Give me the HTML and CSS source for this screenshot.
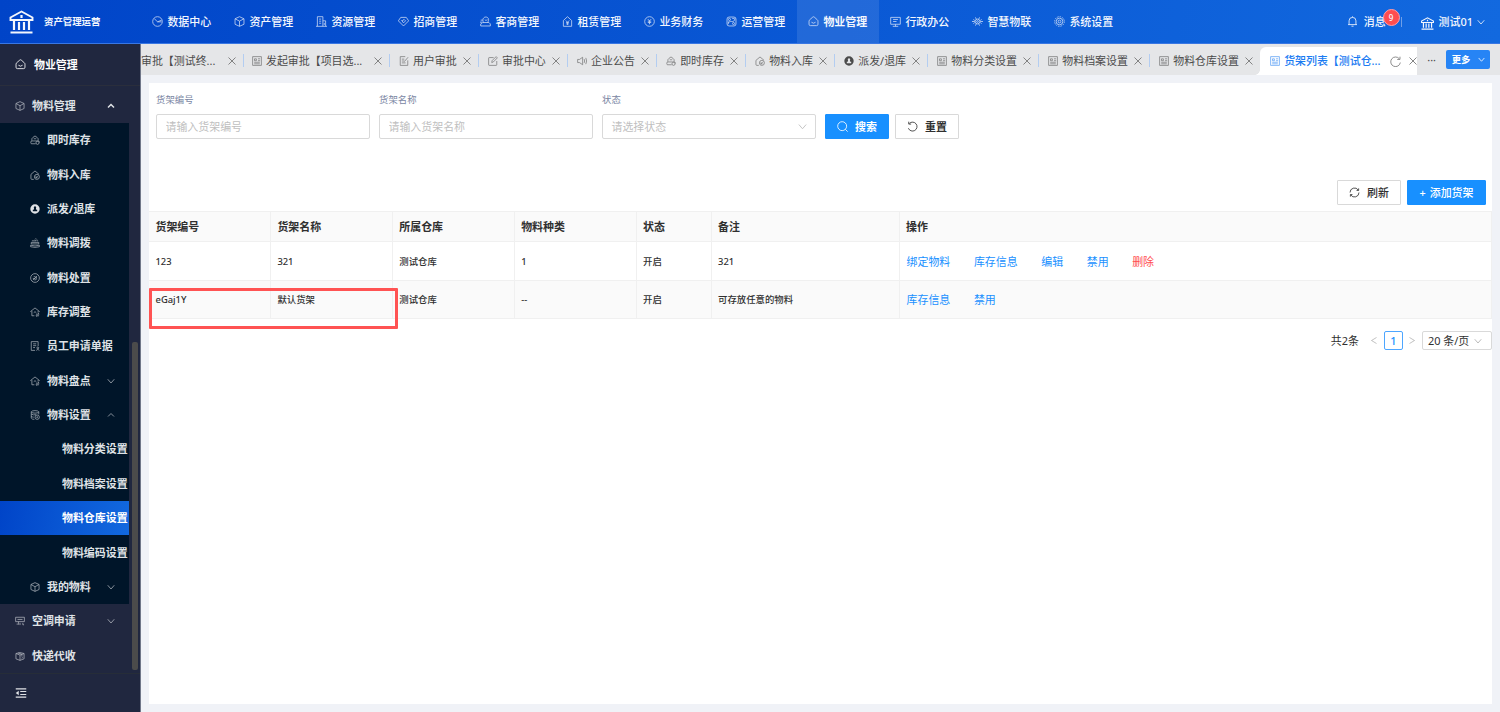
FILE: index.html
```html
<!DOCTYPE html>
<html lang="zh-CN">
  <head>
    <meta charset="UTF-8" />
    <meta name="viewport" content="width=device-width, initial-scale=1.0" />
    <title>资产管理运营</title>
    <link rel="stylesheet" href="styles.css">
  </head>
  <body>
    <!-- Icon sprite -->
    <svg class="sprite" xmlns="http://www.w3.org/2000/svg">
      <symbol id="i-bank" viewBox="0 0 24 24"><path d="M1 10V7.500L12 1.500 23 7.500V10Z" stroke-width="1.900"/><path d="M12 5v3M4.500 10.500V20M9.500 12v8M14.500 12v8M19.500 10.500V20M1 22.500h22" stroke-width="2.200"/></symbol>
      <symbol id="i-pie" viewBox="0 0 16 16"><circle cx="8" cy="8" r="7"/><path d="M3.500 4 8 8.500 14 6M8 8.500h6"/></symbol>
      <symbol id="i-cube" viewBox="0 0 16 16"><path d="M8 1l6.500 3v8L8 15l-6.500-3V4zM1.500 4 8 7.500 14.500 4M8 7.500V15"/></symbol>
      <symbol id="i-building" viewBox="0 0 16 16"><path d="M2 15V1h8v14M10 7h4v8M0 15h16M4.500 4.500h3M4.500 7.500h3M4.500 10.500h3M12 10v3"/></symbol>
      <symbol id="i-tag" viewBox="0 0 16 16"><path d="M4 2h8l3.500 5L8 14.500.500 7zM5 6l3 4 3-3-2-2-3 2"/></symbol>
      <symbol id="i-client" viewBox="0 0 16 16"><path d="M5 9.500C3 5 5 1.500 8.500 1.500S14 5 11 9.500M1 14.500v-3l3-2h9l2 2v3zM1 6h3M0 9h3M7 5.500c1 1 2 1 4 0"/></symbol>
      <symbol id="i-rent" viewBox="0 0 16 16"><path d="M2 6.500 8 1l6 5.500V15H2zM5.500 6.500 8 9l2.500-2.500M8 9v4M6 9.500h4M6 11.500h4"/></symbol>
      <symbol id="i-money" viewBox="0 0 16 16"><circle cx="8" cy="8" r="7"/><path d="M5.500 4.500 8 7l2.500-2.500M8 7v5M5.500 7.500h5M5.500 9.500h5"/></symbol>
      <symbol id="i-operate" viewBox="0 0 16 16"><rect x="1.500" y="1.500" width="13" height="13" rx="3"/><circle cx="5" cy="5" r="1.500"/><circle cx="11" cy="11" r="1.500"/><path d="M3 12q1-5 5-4t5-4M9 3.500h3.500M3.500 8v2"/></symbol>
      <symbol id="i-home" viewBox="0 0 16 16"><path d="M1.500 7.500Q1.500 6 3 5L7 1.500q1-.8 2 0L13 5q1.500 1 1.500 2.500V12q0 2-2 2h-9q-2 0-2-2zM5 9q3 3 6 0"/></symbol>
      <symbol id="i-screen" viewBox="0 0 16 16"><path d="M1 2h14v10H1zM4 15h8M8 12v3M4.500 5h7M4.500 8h5"/></symbol>
      <symbol id="i-iot" viewBox="0 0 16 16"><circle cx="8" cy="8" r="3.500"/><circle cx="8" cy="8" r="1.300"/><path d="M5 2l1.500 3M11 2 9.500 5M5 14l1.500-3M11 14 9.500 11M0 8h4M12 8h4M2 5l2 1.500M14 5l-2 1.500M2 11l2-1.500M14 11l-2-1.500"/></symbol>
      <symbol id="i-gear" viewBox="0 0 16 16"><circle cx="8" cy="8" r="7" stroke-dasharray="2.200 1.400"/><circle cx="8" cy="8" r="4.800"/><circle cx="8" cy="8" r="2"/></symbol>
      <symbol id="i-bell" viewBox="0 0 16 16"><path d="M1.500 12.500h13M3 12.500V7q0-5 5-5t5 5v5.500M6.500 14.800h3M8 .5V2"/></symbol>
      <symbol id="i-form" viewBox="0 0 16 16"><path d="M1 1h14v14H1zM4 4.500h3v3H4zM9.500 4.500H13M9.500 7.500H13M3.500 10h9M3.500 12.500h9"/></symbol>
      <symbol id="i-audit" viewBox="0 0 16 16"><path d="M10 1H2v14h12V7M4.500 5h4M4.500 8h4M4.500 11h6M8.500 9l6-7"/></symbol>
      <symbol id="i-edit" viewBox="0 0 16 16"><path d="M9 2.500H2q-1 0-1 1V14q0 1 1 1h11q1 0 1-1V8M6 10.500l.5-3L13 1l2 2-6.500 6.500z"/></symbol>
      <symbol id="i-sound" viewBox="0 0 16 16"><path d="M1 5.500h3L9 2v12l-5-3.500H1zM11.500 5q1.500 3 0 6M14 3q3 5 0 10"/></symbol>
      <symbol id="i-stock" viewBox="0 0 16 16"><path d="M3 9V6.500Q3 5 4.500 4L8 1.500 11.500 4Q13 5 13 6.500V9M6 6h4M9 14H2q-1.500-2 0-4.500h12q1 1 1 2.500"/><circle cx="12" cy="12.500" r="2.500"/></symbol>
      <symbol id="i-inbound" viewBox="0 0 16 16"><path d="M6 15H3q-1.500 0-1.500-1.500V7L8 1.500 14.500 7"/><circle cx="11" cy="11" r="4"/><path d="M12.500 9.500l-3 3M9.500 10v2.500H12"/></symbol>
      <symbol id="i-dispatch" viewBox="0 0 16 16"><path fill="currentColor" stroke="none" fill-rule="evenodd" d="M8 .5a7.500 7.500 0 1 1 0 15 7.500 7.500 0 0 1 0-15zM8 3.500a2 2 0 0 0-1.500 3.200L6 9H4.500v2.500h7V9H10l-.5-2.300A2 2 0 0 0 8 3.500z"/></symbol>
      <symbol id="i-transfer" viewBox="0 0 16 16"><path d="M2 7h12v2.500H2zM1 11.500q7 2.500 14 0V14q-7 2-14 0zM3 4.500h7L8 2.500M13 4.500h-2M9 .5l2 2"/></symbol>
      <symbol id="i-dispose" viewBox="0 0 16 16"><circle cx="8" cy="8" r="7"/><path d="M4.500 11.500l7-7M6 5.500l4.500 1.500-1 4M4.500 8.500 8 9v3"/></symbol>
      <symbol id="i-adjust" viewBox="0 0 16 16"><path d="M.5 7.500 8 1.500l7.500 6M3 6.500V14h4M13 6.500V9M6 9q2-3 4 0M9.500 11.500h5l-1.500-2M14.500 14h-5l1.500 1.500"/></symbol>
      <symbol id="i-request" viewBox="0 0 16 16"><path d="M8 15H2V1h11v7M5 4.500h5M5 7.500h5M5 10.500h3"/><circle cx="12.500" cy="11" r="1.500"/><path d="M10 15q2.500-3 5 0"/></symbol>
      <symbol id="i-data" viewBox="0 0 16 16"><ellipse cx="8" cy="3" rx="6" ry="2"/><path d="M2 3v10q1 2 5 2M14 3v4M2 6.500q3 2 8 1M2 10q2 1.500 4 1.500"/><circle cx="11.500" cy="11.500" r="3.500"/><circle cx="11.500" cy="11.500" r=".8"/></symbol>
      <symbol id="i-aircon" viewBox="0 0 16 16"><path d="M1 2h14v7H1zM4 5.500h8M3.500 12v2M8 11v3.500M12.500 11v3h2M5.500 9v5"/></symbol>
      <symbol id="i-express" viewBox="0 0 16 16"><path d="M8 2.500 1.500 4v8.500L8 15l6.500-2.500V4zM1.500 4 8 6.500V15M8 6.500 14.500 4M5 3l6 2.300V9M10.500 11.500l2-1"/></symbol>
      <symbol id="i-fold" viewBox="0 0 16 16"><path d="M1 2.500h14M7 6h8M7 10h8M1 13.500h14" stroke-width="1.500"/><path d="M5 5v6L1 8z" fill="currentColor" stroke="none"/></symbol>
      <symbol id="i-down" viewBox="0 0 16 16"><path d="M1.500 4.500 8 12l6.500-7.500"/></symbol>
      <symbol id="i-up" viewBox="0 0 16 16"><path d="M2 11l6-6 6 6"/></symbol>
      <symbol id="i-left" viewBox="0 0 16 16"><path d="M13 2 3 8l10 6"/></symbol>
      <symbol id="i-right" viewBox="0 0 16 16"><path d="M3 2l10 6-10 6"/></symbol>
      <symbol id="i-close" viewBox="0 0 16 16"><path d="M1 1l14 14M15 1 1 15"/></symbol>
      <symbol id="i-reload" viewBox="0 0 16 16"><path d="M13.500 4A7 7 0 1 0 15 9.500M14.500 1v4h-4"/></symbol>
      <symbol id="i-search" viewBox="0 0 16 16"><circle cx="7.500" cy="7.500" r="6.500"/><path d="M12 12l3.500 3.500"/></symbol>
      <symbol id="i-undo" viewBox="0 0 16 16"><path d="M3.500 3.500A6.500 6.500 0 1 1 2 10.500M2.500 1v3.500H6"/></symbol>
      <symbol id="i-sync" viewBox="0 0 16 16"><path d="M1.500 8A6.500 6.500 0 0 1 13.500 4.500M14.500 8A6.500 6.500 0 0 1 2.500 11.500M14 2v3h-3M2 14v-3h3"/></symbol>
    </svg>

    <header class="topbar">
      <div class="brand">
        <svg class="brand-logo"><use href="#i-bank"/></svg>
        <span>资产管理运营</span>
      </div>
      <nav class="topnav">
        <a class="topnav-item"><svg class="icon"><use href="#i-pie"/></svg>数据中心</a>
        <a class="topnav-item"><svg class="icon"><use href="#i-cube"/></svg>资产管理</a>
        <a class="topnav-item"><svg class="icon"><use href="#i-building"/></svg>资源管理</a>
        <a class="topnav-item"><svg class="icon"><use href="#i-tag"/></svg>招商管理</a>
        <a class="topnav-item"><svg class="icon"><use href="#i-client"/></svg>客商管理</a>
        <a class="topnav-item"><svg class="icon"><use href="#i-rent"/></svg>租赁管理</a>
        <a class="topnav-item"><svg class="icon"><use href="#i-money"/></svg>业务财务</a>
        <a class="topnav-item"><svg class="icon"><use href="#i-operate"/></svg>运营管理</a>
        <a class="topnav-item active"><svg class="icon"><use href="#i-home"/></svg>物业管理</a>
        <a class="topnav-item"><svg class="icon"><use href="#i-screen"/></svg>行政办公</a>
        <a class="topnav-item"><svg class="icon"><use href="#i-iot"/></svg>智慧物联</a>
        <a class="topnav-item"><svg class="icon"><use href="#i-gear"/></svg>系统设置</a>
      </nav>
      <div class="userbar">
        <a class="message"><svg class="icon"><use href="#i-bell"/></svg>消息<span class="badge">9</span></a>
        <a class="user"><svg class="user-logo"><use href="#i-bank"/></svg>测试01<svg class="icon arrow"><use href="#i-down"/></svg></a>
      </div>
    </header>

    <div class="layout">
      <aside class="sidebar">
        <div class="side-title"><svg class="icon"><use href="#i-home"/></svg>物业管理</div>
        <div class="side-scroll">
          <div class="menu">
            <div class="menu-item open"><svg class="icon"><use href="#i-cube"/></svg>物料管理<svg class="caret"><use href="#i-up"/></svg></div>
            <div class="submenu">
              <div class="menu-item"><svg class="icon"><use href="#i-stock"/></svg>即时库存</div>
              <div class="menu-item"><svg class="icon"><use href="#i-inbound"/></svg>物料入库</div>
              <div class="menu-item"><svg class="icon solid"><use href="#i-dispatch"/></svg>派发/退库</div>
              <div class="menu-item"><svg class="icon"><use href="#i-transfer"/></svg>物料调拨</div>
              <div class="menu-item"><svg class="icon"><use href="#i-dispose"/></svg>物料处置</div>
              <div class="menu-item"><svg class="icon"><use href="#i-adjust"/></svg>库存调整</div>
              <div class="menu-item"><svg class="icon"><use href="#i-request"/></svg>员工申请单据</div>
              <div class="menu-item"><svg class="icon"><use href="#i-adjust"/></svg>物料盘点<svg class="caret"><use href="#i-down"/></svg></div>
              <div class="menu-item"><svg class="icon"><use href="#i-data"/></svg>物料设置<svg class="caret"><use href="#i-up"/></svg></div>
              <div class="menu-item leaf">物料分类设置</div>
              <div class="menu-item leaf">物料档案设置</div>
              <div class="menu-item leaf selected">物料仓库设置</div>
              <div class="menu-item leaf">物料编码设置</div>
              <div class="menu-item"><svg class="icon"><use href="#i-cube"/></svg>我的物料<svg class="caret"><use href="#i-down"/></svg></div>
            </div>
            <div class="menu-item"><svg class="icon"><use href="#i-aircon"/></svg>空调申请<svg class="caret"><use href="#i-down"/></svg></div>
            <div class="menu-item"><svg class="icon"><use href="#i-express"/></svg>快递代收</div>
          </div>
          <div class="scrollbar"></div>
        </div>
        <div class="side-foot"><svg class="fold"><use href="#i-fold"/></svg></div>
      </aside>

      <main class="main">
        <div class="tabs">
          <div class="tab first"><span class="label">审批【测试终...</span><svg class="close"><use href="#i-close"/></svg></div>
          <div class="tab wide"><svg class="icon"><use href="#i-form"/></svg><span class="label">发起审批【项目选...</span><svg class="close"><use href="#i-close"/></svg></div>
          <div class="tab"><svg class="icon"><use href="#i-audit"/></svg><span class="label">用户审批</span><svg class="close"><use href="#i-close"/></svg></div>
          <div class="tab"><svg class="icon"><use href="#i-edit"/></svg><span class="label">审批中心</span><svg class="close"><use href="#i-close"/></svg></div>
          <div class="tab"><svg class="icon"><use href="#i-sound"/></svg><span class="label">企业公告</span><svg class="close"><use href="#i-close"/></svg></div>
          <div class="tab"><svg class="icon"><use href="#i-stock"/></svg><span class="label">即时库存</span><svg class="close"><use href="#i-close"/></svg></div>
          <div class="tab"><svg class="icon"><use href="#i-inbound"/></svg><span class="label">物料入库</span><svg class="close"><use href="#i-close"/></svg></div>
          <div class="tab"><svg class="icon solid"><use href="#i-dispatch"/></svg><span class="label">派发/退库</span><svg class="close"><use href="#i-close"/></svg></div>
          <div class="tab"><svg class="icon"><use href="#i-form"/></svg><span class="label">物料分类设置</span><svg class="close"><use href="#i-close"/></svg></div>
          <div class="tab"><svg class="icon"><use href="#i-form"/></svg><span class="label">物料档案设置</span><svg class="close"><use href="#i-close"/></svg></div>
          <div class="tab last"><svg class="icon"><use href="#i-form"/></svg><span class="label">物料仓库设置</span><svg class="close"><use href="#i-close"/></svg></div>
          <div class="tab current"><svg class="icon"><use href="#i-form"/></svg><span class="label">货架列表【测试仓...</span><svg class="reload"><use href="#i-reload"/></svg><svg class="close"><use href="#i-close"/></svg></div>
          <span class="tab-dots">···</span>
          <button class="more">更多<svg class="icon"><use href="#i-down"/></svg></button>
        </div>

        <section class="card">
          <form class="filters">
            <div class="field">
              <label>货架编号</label>
              <input type="text" placeholder="请输入货架编号" />
            </div>
            <div class="field">
              <label>货架名称</label>
              <input type="text" placeholder="请输入货架名称" />
            </div>
            <div class="field">
              <label>状态</label>
              <div class="select">请选择状态<svg class="icon"><use href="#i-down"/></svg></div>
            </div>
            <button type="button" class="btn primary search"><svg class="icon"><use href="#i-search"/></svg>搜索</button>
            <button type="button" class="btn reset"><svg class="icon"><use href="#i-undo"/></svg>重置</button>
          </form>

          <div class="toolbar">
            <button class="btn"><svg class="icon"><use href="#i-sync"/></svg>刷新</button>
            <button class="btn primary add"><span class="plus">+</span>添加货架</button>
          </div>

          <div class="table-wrap">
            <table class="table">
              <colgroup>
                <col class="col-md" /><col class="col-md" /><col class="col-md" /><col class="col-md" />
                <col class="col-status" /><col class="col-remark" /><col />
              </colgroup>
              <thead>
                <tr>
                  <th>货架编号</th>
                  <th>货架名称</th>
                  <th>所属仓库</th>
                  <th>物料种类</th>
                  <th>状态</th>
                  <th>备注</th>
                  <th>操作</th>
                </tr>
              </thead>
              <tbody>
                <tr>
                  <td>123</td>
                  <td>321</td>
                  <td>测试仓库</td>
                  <td>1</td>
                  <td>开启</td>
                  <td>321</td>
                  <td class="actions"><a>绑定物料</a><a>库存信息</a><a>编辑</a><a>禁用</a><a class="danger">删除</a></td>
                </tr>
                <tr class="striped">
                  <td>eGaj1Y</td>
                  <td>默认货架</td>
                  <td>测试仓库</td>
                  <td>--</td>
                  <td>开启</td>
                  <td>可存放任意的物料</td>
                  <td class="actions"><a>库存信息</a><a>禁用</a></td>
                </tr>
              </tbody>
            </table>
            <div class="highlight"></div>
          </div>

          <div class="pagination">
            <span class="total">共2条</span>
            <svg class="page-arrow"><use href="#i-left"/></svg>
            <span class="page">1</span>
            <svg class="page-arrow"><use href="#i-right"/></svg>
            <div class="page-size">20 条/页<svg class="icon"><use href="#i-down"/></svg></div>
          </div>
        </section>
      </main>
    </div>
  </body>
</html>
```
FILE: styles.css
```css
* {
  box-sizing: border-box;
}

body {
  margin: 0;
  width: 1500px;
  height: 712px;
  overflow: hidden;
  font-family: "Noto Sans", "Noto Sans CJK SC", sans-serif;
  font-size: 10.95px;
  line-height: 16px;
  color: #303030;
  background: #f0f2f7;
}

.sprite {
  display: none;
}

svg {
  flex: none;
  fill: none;
  stroke: currentColor;
  stroke-width: 1.2;
}

.icon {
  width: 11px;
  height: 11px;
}

/* Header */
.topbar {
  display: flex;
  height: 44px;
  color: #f4f7fd;
  font-weight: 500;
  background: linear-gradient(100deg, #0044c8, #1269df);
  border-bottom: 1px solid #3977e3;
}

.brand {
  display: flex;
  align-items: center;
  width: 141px;
  padding-left: 9px;
  font-size: 9.4px;
  font-weight: 700;
}

.brand-logo {
  width: 25px;
  height: 24px;
  margin-right: 10px;
}

.topnav {
  display: flex;
}

.topnav-item {
  display: flex;
  align-items: center;
  gap: 4px;
  width: 82px;
  padding-left: 11.4px;
  white-space: nowrap;
}

.topnav-item .icon {
  opacity: 0.8;
}

.topnav-item.active {
  font-weight: 700;
  background: rgba(255, 255, 255, 0.1);
}

.userbar {
  display: flex;
  align-items: center;
  margin-left: auto;
  padding-right: 15px;
}

.message {
  position: relative;
  display: flex;
  align-items: center;
  gap: 6px;
  margin-right: 19px;
  padding-right: 16px;
}

.message::after {
  content: "";
  position: absolute;
  right: 0;
  top: 3px;
  width: 1px;
  height: 10px;
  background: #6f9fe8;
}

.badge {
  position: absolute;
  top: -5px;
  right: 2px;
  width: 17px;
  height: 17px;
  border: 1px solid #ff9fa8;
  border-radius: 50%;
  background: #ff4d4f;
  font-size: 8px;
  line-height: 15px;
  text-align: center;
}

.user {
  display: flex;
  align-items: center;
}

.user-logo {
  width: 13px;
  height: 13px;
  margin: 3px 5px 0 0;
}

.user-logo,
.user .arrow {
  stroke-width: 1.6;
}

.user .arrow {
  width: 8px;
  height: 8px;
  margin-left: 4px;
}

.layout {
  display: flex;
  height: 668px;
}

/* Sidebar */
.sidebar {
  display: flex;
  flex-direction: column;
  width: 141px;
  color: #dfe2e6;
  font-weight: 700;
  background: #20273f;
  border-right: 1px solid #707789;
}

.side-title {
  display: flex;
  align-items: center;
  gap: 8px;
  height: 42px;
  padding-left: 15px;
  color: #fff;
  border-bottom: 1px solid #2a2e3c;
}

.side-scroll {
  display: flex;
  height: 587px;
  padding-top: 2.7px;
}

.menu {
  width: 129px;
}

.menu-item {
  display: flex;
  align-items: center;
  height: 34.37px;
  padding-left: 15px;
  white-space: nowrap;
}

.menu-item .icon {
  width: 10px;
  height: 10px;
  margin-right: 7px;
  opacity: 0.75;
}

.menu-item .solid {
  opacity: 1;
}

.caret {
  width: 8px;
  height: 8px;
  margin: 0 14px 0 auto;
  stroke-width: 2;
  opacity: 0.6;
}

.menu-item.open .caret {
  stroke-width: 3;
  opacity: 1;
}

.submenu {
  background: #001529;
}

.submenu .menu-item {
  padding-left: 30px;
}

.submenu .leaf {
  padding-left: 62px;
}

.menu-item.selected {
  color: #fff;
  background: linear-gradient(100deg, #0044c8, #1269df);
}

.scrollbar {
  width: 6px;
  height: 328px;
  margin: 253.3px 0 0 3px;
  border-radius: 2px;
  background: #4b4b4b;
}

.side-foot {
  display: flex;
  align-items: center;
  flex: 1;
  padding-left: 15px;
  border-top: 1px solid #262d38;
}

.fold {
  width: 12px;
  height: 12px;
}

/* Tabs */
.main {
  width: 1359px;
}

.tabs {
  display: flex;
  align-items: flex-end;
  height: 31px;
  color: #4b4b4b;
  background: #e5e6e8;
}

.tab {
  position: relative;
  display: flex;
  align-items: center;
  height: 28px;
  padding: 0 6px 0 10px;
  white-space: nowrap;
}

.tab::after {
  content: "";
  position: absolute;
  right: -1px;
  top: 7px;
  width: 1px;
  height: 13px;
  background: #b3cdf1;
}

.tab .icon {
  width: 10px;
  height: 10px;
  margin-right: 4px;
  opacity: 0.7;
}

.tab .solid {
  opacity: 1;
}

.tab .close {
  width: 8px;
  height: 8px;
  margin-left: 6.3px;
  margin-right: 1px;
  color: #777;
  stroke-width: 1.8;
}

.tab.first {
  width: 102px;
  padding-left: 0;
}

.tab.wide {
  width: 146px;
  padding-left: 9px;
}

.tab.first .close,
.tab.wide .close {
  margin-left: auto;
}

.tab.last::after,
.tab.current::after {
  display: none;
}

.tab.current {
  width: 157px;
  padding-right: 0;
  color: #1a7bf2;
  font-weight: 500;
  background: #fff;
  border-radius: 6px 0 0 0;
}

/* flared foot of the current tab */
.tab.current::before {
  content: "";
  position: absolute;
  left: -5px;
  bottom: 0;
  width: 5px;
  height: 5px;
  background: radial-gradient(circle at 0 0, transparent 4.5px, #fff 5px);
}

.tab .reload {
  width: 11px;
  height: 11px;
  margin-left: auto;
  color: #777;
}

.tab.current .close {
  margin-left: 8px;
  margin-right: 0;
}

.tab-dots {
  align-self: center;
  width: 29px;
  text-align: center;
}

.more {
  display: flex;
  align-items: center;
  align-self: center;
  justify-content: center;
  gap: 7px;
  width: 44px;
  height: 19px;
  padding: 0;
  border: 0;
  border-radius: 2px;
  color: #fff;
  font: 700 9.4px/16px "Noto Sans", "Noto Sans CJK SC", sans-serif;
  background: #2684f5;
}

.more .icon {
  width: 7px;
  height: 7px;
  stroke-width: 1.8;
}

/* Content */
.card {
  width: 1343px;
  height: 621px;
  margin: 8px 0 0 8px;
  background: #fff;
}

.filters {
  display: flex;
  align-items: flex-end;
  height: 56px;
  padding-left: 7px;
}

.field {
  width: 214px;
  margin-right: 9px;
}

.field label {
  display: block;
  margin-bottom: 6px;
  font-size: 9.4px;
  line-height: 16px;
  color: #7a86a3;
}

.field input,
.select {
  display: flex;
  align-items: center;
  justify-content: space-between;
  width: 100%;
  height: 25px;
  padding: 0 8.5px;
  border: 1px solid #d9d9d9;
  border-radius: 2px;
  font: inherit;
  color: #bfbfbf;
}

.field input::placeholder {
  color: #bfbfbf;
}

.select .icon {
  width: 9px;
  height: 9px;
  stroke-width: 1.6;
}

.btn {
  display: flex;
  align-items: center;
  justify-content: center;
  gap: 7px;
  width: 64px;
  height: 25px;
  padding: 0;
  border: 1px solid #d9d9d9;
  border-radius: 1px;
  font: inherit;
  font-weight: 500;
  color: #303030;
  background: #fff;
}

.btn.primary {
  color: #fff;
  border-color: #1890ff;
  background: #1890ff;
}

.btn.search {
  margin-right: 6px;
  font-weight: 700;
}

.btn.reset {
  font-weight: 700;
}

.btn.add {
  gap: 4px;
  width: 79px;
}

.toolbar {
  display: flex;
  justify-content: flex-end;
  gap: 6px;
  margin-top: 41px;
  padding-right: 6px;
}

.table-wrap {
  position: relative;
  margin-top: 6px;
}

.table {
  width: 100%;
  table-layout: fixed;
  border-collapse: separate;
  border-spacing: 0;
  border-top: 1px solid #f0f0f0;
}

.col-md {
  width: 121.9px;
}

.col-status {
  width: 75px;
}

.col-remark {
  width: 188px;
}

.table th,
.table td {
  padding: 0 6.5px;
  text-align: left;
  border-right: 1px solid #f0f0f0;
  border-bottom: 1px solid #f0f0f0;
}

.table th {
  height: 30px;
  font-weight: 700;
  background: #fafafa;
}

.table td {
  height: 38.5px;
  padding-top: 1.5px;
  font-size: 9.4px;
  font-weight: 500;
}

.table .striped td {
  background: #fafafa;
}

.table .actions {
  padding-left: 7px;
  font-size: 10.95px;
  font-weight: 400;
}

.actions a {
  margin-right: 23.6px;
  color: #1890ff;
}

.actions .danger {
  color: #ff4d4f;
}

/* red frame around the default shelf */
.highlight {
  position: absolute;
  left: 0;
  top: 77px;
  width: 249px;
  height: 41px;
  border: 3px solid #ff5353;
  border-radius: 1px;
}

.pagination {
  display: flex;
  align-items: center;
  justify-content: flex-end;
  margin-top: 12px;
}

.page-arrow {
  width: 8px;
  height: 9px;
  color: #999;
}

.total {
  margin-right: 11px;
}

.page {
  width: 19px;
  height: 19px;
  margin: 0 5px 0 6px;
  border: 1px solid #4da6ff;
  border-radius: 2px;
  line-height: 17px;
  text-align: center;
  font-weight: 500;
  color: #1890ff;
}

.page-size {
  display: flex;
  align-items: center;
  gap: 5px;
  width: 70px;
  height: 19px;
  margin-left: 6px;
  padding-left: 5px;
  border: 1px solid #d9d9d9;
  border-radius: 2px;
  white-space: nowrap;
}

.page-size .icon {
  width: 8px;
  height: 8px;
  color: #aaa;
  stroke-width: 1.6;
}
```
